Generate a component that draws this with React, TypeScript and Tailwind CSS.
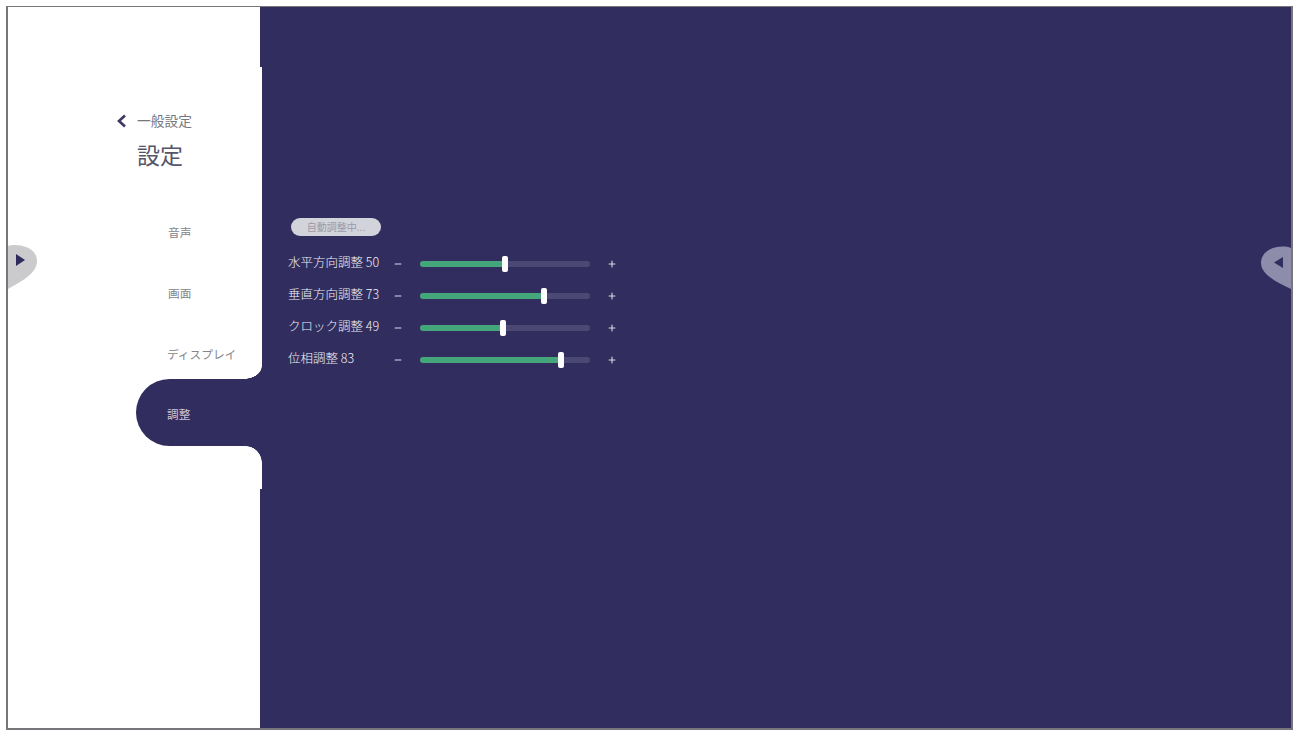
import { Minus, Plus } from "lucide-react";

const navy = "bg-[#312d5e]";

const sliders = [
	{ label: "水平方向調整 50", value: 50 },
	{ label: "垂直方向調整 73", value: 73 },
	{ label: "クロック調整 49", value: 49 },
	{ label: "位相調整 83", value: 83 },
];

function SliderRow({ label, value }: { label: string; value: number }) {
	return (
		<div className="flex h-[32px] items-center pl-[28px]">
			<span className="w-[100px] whitespace-nowrap pb-[4px] text-[12.5px] font-light text-[#f0f0f6]">{label}</span>
			<div className="w-[32px] pl-[5px]">
				<Minus size={10} strokeWidth={2.6} className="text-[#dcdce8]" />
			</div>
			<div className="relative h-[6px] w-[170px] rounded-full bg-[#4b4974]">
				<div className="h-full rounded-full bg-[#45a67b]" style={{ width: `${value}%` }} />
				<div
					className="absolute top-[-5px] h-[16px] w-[6px] -translate-x-1/2 rounded-[2px] bg-white"
					style={{ left: `${value}%` }}
				/>
			</div>
			<div className="pl-[17px]">
				<Plus size={10} strokeWidth={2.6} className="text-[#dcdce8]" />
			</div>
		</div>
	);
}

export default function App() {
	return (
		<div className="h-[732px] w-full overflow-hidden bg-white pb-[2px] pl-[6px] pr-[5px] pt-[6px] font-['Noto_Sans_CJK_JP','Liberation_Sans',sans-serif]">
			<div className="flex h-full border-2 border-t-[1.5px] border-[#77777b]">
				{/* Sidebar */}
				<aside className="relative z-10 flex w-[252px] shrink-0 flex-col bg-white pt-[104px]">
					<div className="flex h-[20px] items-center pl-[108px]">
						<svg width="11" height="14" viewBox="0 0 11 14" fill="none">
							<path d="M9 1.5 L3 7 L9 12.5" stroke="#3b3864" strokeWidth="2.6" />
						</svg>
						<span className="ml-[10px] text-[13.75px] leading-none text-[#77777f]">一般設定</span>
					</div>
					<h1 className="mt-[7px] h-[32px] pl-[129px] text-[23px] font-normal leading-[32px] text-[#55556a]">設定</h1>

					<nav className="mt-[31px] flex flex-col text-[11.7px] text-[#85858a]">
						<div className="flex h-[61px] items-center pl-[160px]">音声</div>
						<div className="flex h-[61px] items-center pl-[160px]">画面</div>
						<div className="flex h-[56px] items-center pl-[159px] pt-[5px]">ディスプレイ</div>
						<div className={`relative ml-[128px] mr-[-2px] flex h-[67px] items-center rounded-l-full pl-[31px] pt-[3px] text-[#c9c9dc] ${navy}`}>
							調整
							<div className="absolute right-0 top-[-13px] h-[13px] w-[18px] bg-[radial-gradient(ellipse_18px_13px_at_0_0,transparent_97%,#312d5e_100%)]" />
							<div className="absolute bottom-[-17px] right-0 h-[17px] w-[16px] bg-[radial-gradient(ellipse_16px_17px_at_0_100%,transparent_97%,#312d5e_100%)]" />
						</div>
					</nav>

					{/* slightly wider white strip next to the panel */}
					<div className="absolute left-full top-[60px] -z-10 h-[422px] w-[2px] bg-white" />

					{/* left drawer handle */}
					<svg className="absolute left-0 top-[237px]" width="30" height="46" viewBox="0 0 30 46">
						<path d="M0 2 C8 -1 29 2 29 17 C29 30 12 38 0 45 Z" fill="#cbcbcd" />
						<path d="M8 10 L17 16 L8 22 Z" fill="#2f2b5c" />
					</svg>
				</aside>

				{/* Main panel */}
				<main className={`relative flex-1 pt-[211px] ${navy}`}>
					<button className="ml-[31px] block h-[18px] w-[90px] rounded-full bg-[#d3d3db] text-center text-[10px] leading-[18px] text-[#9a9aa6]">
						自動調整中...
					</button>
					<div className="mt-[12px] flex flex-col">
						{sliders.map((s) => (
							<SliderRow key={s.label} label={s.label} value={s.value} />
						))}
					</div>

					{/* right drawer handle */}
					<svg className="absolute right-0 top-[239px]" width="30" height="44" viewBox="0 0 30 44">
						<path d="M30 2 C20 -2 0 2 0 17 C0 29 18 37 30 43 Z" fill="#8e8cab" />
						<path d="M22 11 L13 16.5 L22 22 Z" fill="#312d5e" />
					</svg>
				</main>
			</div>
		</div>
	);
}
